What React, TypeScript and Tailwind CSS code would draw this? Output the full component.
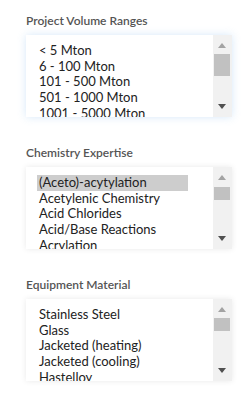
import React from "react";

type Section = {
  label: string;
  items: string[];
  selected?: number;
  focused?: boolean;
  thumbTop: number;
  thumbH: number;
};

const sections: Section[] = [
  {
    label: "Project Volume Ranges",
    items: ["< 5 Mton", "6 - 100 Mton", "101 - 500 Mton", "501 - 1000 Mton", "1001 - 5000 Mton"],
    focused: true,
    thumbTop: 19,
    thumbH: 22,
  },
  {
    label: "Chemistry Expertise",
    items: ["(Aceto)-acytylation", "Acetylenic Chemistry", "Acid Chlorides", "Acid/Base Reactions", "Acrylation"],
    selected: 0,
    thumbTop: 20,
    thumbH: 13,
  },
  {
    label: "Equipment Material",
    items: ["Stainless Steel", "Glass", "Jacketed (heating)", "Jacketed (cooling)", "Hastelloy"],
    thumbTop: 19,
    thumbH: 13,
  },
];

function ListBox({ s }: { s: Section }) {
  return (
    <div
      className={
        "flex h-[82px] w-[206px] overflow-hidden bg-white " +
        (s.focused
          ? "shadow-[0_0_8px_rgba(120,180,235,0.3)]"
          : "shadow-[0_0_6px_rgba(0,0,0,0.09)]")
      }
    >
      <div className="flex-1 overflow-hidden pl-[11px] pt-[8px] pr-[25px]">
        {s.items.map((it, i) => (
          <div
            key={it}
            className={
              "h-[15.7px] whitespace-nowrap pl-[2px] text-[13px] leading-[15.7px] text-[#222] " +
              (s.selected === i ? "bg-[#cdcdcd]" : "")
            }
          >
            {it}
          </div>
        ))}
      </div>
      <div className="relative h-full w-[19px] bg-[#f1f1f1]">
        <svg className="absolute left-[5px] top-[8px]" width="8" height="5" viewBox="0 0 8 5">
          <path d="M0 5 L4 0 L8 5 Z" fill="#a3a3a3" />
        </svg>
        <div
          className="absolute left-[1px] w-[16px] bg-[#c1c1c1]"
          style={{ top: s.thumbTop, height: s.thumbH }}
        />
        <svg className="absolute bottom-[8px] left-[5px]" width="8" height="5" viewBox="0 0 8 5">
          <path d="M0 0 L8 0 L4 5 Z" fill="#505050" />
        </svg>
      </div>
    </div>
  );
}

export default function App() {
  return (
    <div
      className="h-[402px] w-[250px] bg-white px-[26px] pt-[13px]"
      style={{ fontFamily: "Lato, 'Open Sans', sans-serif" }}
    >
      {sections.map((s, i) => (
        <div key={s.label} className={i > 0 ? "mt-[28px]" : ""}>
          <div className="text-[12px] font-semibold leading-[16px] text-[#555]">{s.label}</div>
          <div className="mt-[6px]">
            <ListBox s={s} />
          </div>
        </div>
      ))}
    </div>
  );
}
